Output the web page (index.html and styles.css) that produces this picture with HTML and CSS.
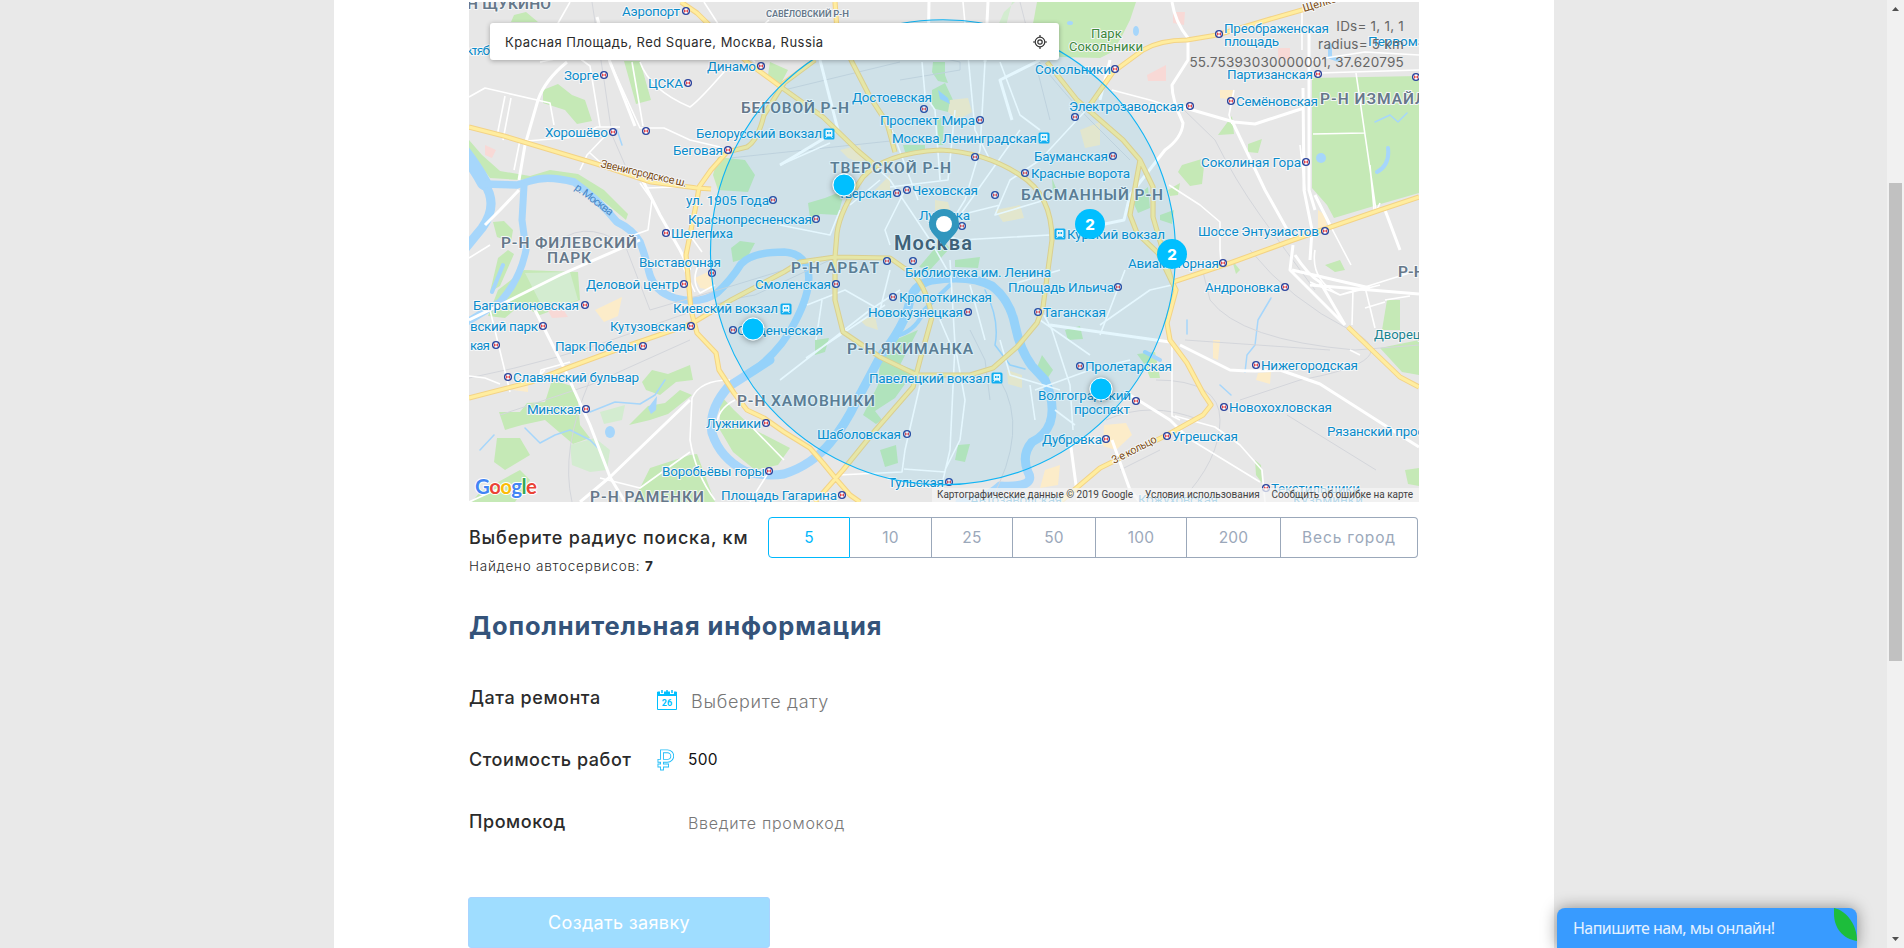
FILE: index.html
```html
<!DOCTYPE html>
<html lang="ru">
<head>
<meta charset="utf-8">
<title>Создать заявку</title>
<link rel="stylesheet" href="styles.css">
</head>
<body>
<div class="viewport">
<main class="sheet">
  <section class="map">
    <svg class="map-canvas" viewBox="469 2 950 500" width="950" height="500">
      <defs>
        <g id="m"><circle r="3.4" fill="#fff" stroke="#2a429b" stroke-width="1.3"/><path d="M-1.5 -1.6V1.6M1.5 -1.6V1.6M-1.5 0H1.5" stroke="#e0484e" stroke-width="1.1" fill="none"/></g>
        <g id="t"><rect x="-5.5" y="-5.5" width="11" height="11" rx="1.5" fill="#14aef0"/><path d="M-3 -3.5H3V2H-3ZM-2 2L-3.5 4M2 2L3.5 4" stroke="#fff" stroke-width="1" fill="#fff"/><path d="M-2 -2H-.5V0H-2ZM.5 -2H2V0H.5Z" fill="#14aef0"/></g>
        <filter id="ds" x="-50%" y="-50%" width="200%" height="200%"><feDropShadow dx="0" dy="1" stdDeviation="3" flood-opacity=".4"/></filter>
        <path id="hw" d="M469 127L504 136 527 143 597 164 651 182 697 188 711 189M681 2L697 13 747 62 781 87 823 117 857 150 877 167M815 60L784 83 764 115Q758 140 747 147L727 152 711 170 699 187 697 200 686 255 691 310 697 333 716 353 719 370 734 393 747 410 764 418 784 432 810 448 823 463 837 480 850 495 860 502M835 257L837 233Q840 210 863 177 Q885 153 940 150Q985 152 1020 175Q1052 195 1052 240L1043 307 1037 323 1017 347 993 368 970 375H917L880 357 843 332 835 300ZM835 2L837 30 852 62 870 97 887 123 895 152M1047 62L1077 100 1100 120 1123 140 1140 160 1153 187V217L1172 282 1176 290 1167 323 1170 340 1187 363 1203 393 1211 405 1203 415 1167 435 1100 468 1060 502M1140 160L1130 215 1137 233 1158 253 1172 282M1090 105L1113 72 1143 50Q1160 40 1187 40L1217 35 1267 20 1330 2M1173 282L1230 263 1293 240 1380 210 1419 197M1348 327L1400 377 1419 387M469 398L531 382 567 368 624 347 691 324 731 300 784 272 800 262 835 257 890 258 907 270Q925 280 932 317L920 360 913 387 873 433 843 470 815 502"/>
      </defs>
      <rect x="469" y="2" width="950" height="500" fill="#e7e7e7"/>
      <!-- parks -->
      <g fill="#c5e9b6">
        <path d="M1037 2H1136L1130 20 1121 38 1112 52 1100 58 1060 57 1030 40Z"/>
        <path d="M1312 78L1419 76V193L1384 203 1334 218 1327 205 1312 188Z"/>
        <path d="M543 90L558 84 572 95 585 100 592 121 577 124 565 110 543 103Z"/>
        <path d="M514 15L526 12 538 22H511ZM624 61H640L651 100 636 104Z"/>
        <path d="M718 157L745 160 755 175 748 192 718 190 713 175Z"/>
        <path d="M731 248L740 241 755 243 747 258 733 262ZM493 222L504 221 513 230 511 242 497 237Z"/>
        <path d="M524 270L578 272 580 300 540 315 520 305 505 318 488 316 498 290ZM498 258L508 250 514 254 500 286 490 292Z"/>
        <path d="M552 380L575 387 578 402 580 425 590 438 573 444 545 420 522 425 505 430 499 412 520 412 527 403 545 402ZM497 438L520 438 530 455 505 470 494 462Z"/>
        <path d="M642 382L652 370 668 374 690 365 693 380 676 382 660 395 646 390ZM629 425L648 406 665 403 680 390 692 395 668 414 650 420Z"/>
        <path d="M720 395L734 410 755 430 790 448 778 465 755 470 733 452 720 430ZM650 468L690 455 697 454 703 470 715 502H633Z"/>
        <path d="M480 492L520 470 530 480 515 502H472Z"/>
        <path d="M895 340L918 330 900 365 915 370 895 398 875 411 882 420 876 424 863 415 878 385 880 362Z"/>
        <path d="M933 62H945V75L948 83 938 81 932 72ZM932 90L945 83 953 100 948 112 932 108Z"/>
        <path d="M937 118L944 118 943 145 938 145ZM903 145L925 145 925 152 905 152ZM808 203L825 198 845 190 838 215 820 214 811 226Z"/>
        <path d="M815 340L829 338 825 352 815 355ZM880 450L896 445 898 463 885 467ZM958 445L970 444 965 462 955 460ZM1065 330L1080 326 1083 339 1068 340ZM1042 355L1053 370 1047 379 1036 370Z"/>
        <path d="M925 260L942 240 950 248 930 270 919 267ZM955 260L980 257 978 268 955 267ZM1132 200L1148 187 1150 208 1138 213ZM1160 215L1174 210 1172 224 1160 220Z"/>
        <path d="M1182 165L1205 158 1202 184 1190 186 1178 172ZM1168 190L1180 183 1178 195 1170 196ZM1248 144L1262 139 1258 153 1248 152ZM1232 116L1234 134 1218 135ZM1255 460L1261 465 1262 483 1256 475Z"/>
        <path d="M1387 300L1400 300 1400 330 1382 330ZM1380 348L1419 340V375L1402 372ZM1405 470L1419 468V486L1408 484ZM1325 265L1340 260 1345 270 1335 272ZM1232 260L1240 270 1236 274Z"/>
        <path d="M770 62L788 70 780 85 768 75ZM1137 354L1155 352 1160 378 1150 378 1145 365ZM1052 178L1058 193 1053 194Z"/>
        <path d="M469 140L482 155 500 171 530 176 550 170 578 174 604 190 628 214 626 220 602 200 576 181 548 175 520 180 490 178 469 150Z"/>
      </g>
      <g fill="#d3ecd0"><path d="M1004 12L1015 2H1012L1005 30H996ZM570 445L595 438 610 450 607 470 590 472 572 465ZM600 412L625 405 622 420 604 424ZM525 273L570 272 578 300 545 312Z"/></g>
      <g fill="#f8d9d6"><path d="M1173 12L1185 12 1184 25 1173 23ZM1147 75L1166 65V81L1148 81ZM1278 48H1290L1290 60 1278 58ZM485 145L496 150 492 158 485 155ZM546 307L560 304 568 317 552 318Z"/></g>
      <g fill="#fcecc9"><path d="M595 310L622 297 618 316 604 322ZM695 278L712 270 712 290 700 288ZM517 383L528 383 528 392 513 390ZM1220 90L1234 90 1234 100 1220 98ZM1104 425L1126 423 1132 435 1116 450 1103 446ZM1258 373L1271 372 1270 384 1256 380ZM1213 340L1220 340 1218 360 1213 358ZM1318 210L1325 215 1328 232 1318 230ZM950 100L968 98 972 112 958 120 948 112ZM935 200L948 202 950 210 935 210ZM875 190L890 175 890 190ZM1080 130L1100 122 1100 145 1085 148ZM995 210L1020 205 1024 218 1003 222ZM840 150L860 145 865 165 848 158ZM860 320L875 316 878 330 866 326ZM1007 370L1022 375 1022 388 1008 384ZM1045 470L1060 465 1058 485 1040 488Z"/></g>
      <!-- water -->
      <g fill="none" stroke="#a6d6fb" stroke-linecap="round" stroke-linejoin="round">
        <path stroke-width="14" d="M462 150Q476 168 484 183"/>
        <path stroke-width="9" d="M484 183Q499 205 482 228L464 250"/>
        <path stroke-width="7.500" d="M484 184L517 185 530 181Q547 175 574 182Q597 198 617 222Q632 229 640 242Q646 258 649 272Q654 292 675 298Q700 305 717 293Q731 280 741 264Q752 252 784 252Q803 253 808 270Q812 290 795 322Q784 345 762 364"/>
        <path stroke-width="7" d="M524 186L522 220 526 250Q520 280 500 302L464 324"/>
        <path stroke-width="9" d="M770 360Q750 373 728 387Q708 410 712 433Q720 458 745 471Q765 477 784 474Q812 465 830 443 Q845 425 856 402 L880 357Q905 325 909 304 Q912 285 932 280 Q970 274 992 286 Q1010 300 1015 325 Q1020 350 1032 366L1045 380Q1056 405 1050 423Q1045 436 1032 442Q1021 455 1028 472Q1037 488 1000 486Q985 500 960 502"/>
        <path stroke-width="4" d="M900 335Q918 328 924 310L950 285"/>
        <path stroke-width="1.5" d="M985 290Q1000 320 995 345L1010 365 1025 369M1271 298L1258 320 1255 345 1247 355 1245 372M590 412L615 402 640 404 655 395 665 380M525 428L540 443 555 435 570 430 590 440 600 450M617 130L622 145M480 450L494 435M1187 320V334M1220 385L1231 395M1375 122L1390 115 1398 122 1407 113"/>
        <path stroke-width="4" d="M1330 45V57L1338 60M1388 148Q1390 165 1377 172M1145 352L1160 360M503 265L492 292"/>
      </g>
      <g fill="#a6d6fb"><ellipse cx="610" cy="432" rx="5" ry="6"/><circle cx="1321" cy="158" r="5"/><ellipse cx="1070" cy="23" rx="3" ry="2"/><ellipse cx="1136" cy="31" rx="3" ry="5"/><path d="M648 408L657 396 656 410 651 414ZM938 90L948 98 950 104 940 99Z"/></g>
      <!-- railways -->
      <g fill="none" stroke="#d4d6db" stroke-width="1">
        <path d="M592 2L604 80 612 135 625 165M469 378Q560 360 640 330T755 295L830 260M784 270L735 285 650 310M500 415L590 385 690 340M550 250Q580 215 625 245L650 310M572 502Q560 450 590 380"/>
        <path d="M880 45L960 62 960 70 900 80M1010 25Q1060 90 1090 120L1130 160M1020 2L1050 120M1181 107L1215 140Q1235 180 1260 215T1315 290M1200 260L1210 300Q1240 340 1355 350L1419 345M1185 340L1330 350M1156 380Q1220 380 1220 420T1180 502M1250 250Q1290 300 1350 330T1300 380L1240 400M1287 415L1376 470M1000 380Q1030 430 990 502M970 330L985 360 990 400M784 90L900 62M730 158L900 140M1120 470L1160 450M1106 420Q1150 400 1200 420"/>
      </g>
      <!-- minor roads -->
      <g fill="none" stroke="#fff" stroke-width="1.6" stroke-linejoin="round">
        <path d="M469 97L485 88 550 103 554 125M505 96L497 136M511 98L503 140M540 62L575 55 590 66 600 127M527 141L575 137 597 127H620M610 62L640 128 664 128 690 140 720 147M632 62L643 126M606 135L587 155 580 170M640 62Q650 90 690 107Q700 100 730 65M540 55L570 2M769 20L735 50 704 2M720 30L755 62M640 183L652 200 648 230 634 235M590 153L600 162M647 188L697 186M469 258L490 245M514 170L520 140"/>
        <path d="M664 233L692 238 702 252M683 267L695 292M700 262Q690 280 700 293L715 285M545 370L540 375 541 370 570 362M469 376L485 378 500 384M692 398Q700 380 730 380M692 398L690 440Q696 475 715 500M690 452L640 488 600 478M735 400Q715 410 717 430M745 420L784 460M770 470L750 502M469 502L500 488M510 392L490 310"/>
        <path d="M780 165L830 143M892 130L918 200M840 210L830 235 780 225M857 150L890 180 910 210 930 240 950 275M1020 130L960 215 1000 205M955 110L948 180 890 187M985 62L980 150 965 200 940 240M905 190L885 230 890 245M1000 62L1020 115 1040 130M922 62L925 95 935 110 940 180M990 160L975 130 963 2M1100 95L1040 160 1010 180 995 215 1045 200M880 180L850 205M1050 235L960 240 930 230"/>
        <path d="M807 305L845 290 880 310 890 270M816 340L822 300M806 358L885 305M780 380L870 310 900 290M920 385L905 450 902 472 838 475M955 345L965 400 960 440 945 470M904 469L945 472M950 260L955 345 950 450 943 480M1000 340L1010 375 1060 390M1040 320L1090 355M1044 315L1052 330 1070 385 1073 430M1030 385L1035 420M1100 325L1150 290 1172 285M1010 285L1060 270M1035 390L1090 370 1130 360M1055 410L1075 425M970 285L985 340M940 320L955 355"/>
        <path d="M1112 90L1150 100 1182 110M1232 124L1229 115 1234 90M1169 185L1200 205 1220 222V250L1221 262M1300 145L1305 190M1313 134L1364 133M1356 73L1376 210M1300 75L1318 73 1419 70M1312 60L1365 52 1419 55M1302 50V10M1370 165L1374 210M1330 225L1351 265M1376 212L1380 203M1365 308L1385 302M1353 290L1352 325M1310 282L1340 295 1380 285M1365 287L1419 270M1315 250Q1310 280 1340 295L1365 287 1375 328M1172 340L1172 416 1180 420M1175 416L1215 427 1240 445 1262 470 1265 502M1188 438L1260 482M1350 350L1360 355M1385 300L1410 296M1100 335L1125 270"/>
      </g>
      <g fill="none" stroke="#fff" stroke-width="3" stroke-linejoin="round">
        <path d="M567 62Q545 80 538 100L525 145 519 180M519 190L500 210 485 225M640 175L660 215 680 250 690 270M469 320L510 300 560 275 640 240M535 310L565 370 590 425 610 477 625 502M610 477L690 400M610 477L580 502M597 17L610 62 635 126"/>
        <path d="M1172 2Q1175 22 1188 38V60L1172 85Q1172 100 1183 123Q1182 138 1165 150L1130 195 1124 220 1100 225M1309 30V190L1315 210M1182 107L1234 122 1255 124 1304 108M1233 123L1265 190 1293 240M1303 88L1304 190L1312 230 1310 260M1315 195L1330 225M1293 245L1290 270 1345 325M1180 345L1230 370Q1255 372 1280 370L1320 384 1400 435 1419 447M1050 325L1170 342M1310 285L1419 294M1385 210L1400 250M1295 255Q1308 275 1320 282L1345 325M1292 270L1370 288M988 2L985 62M929 2L928 60"/>
        <path d="M1110 60L1100 100M1070 440L1078 500M1112 440L1130 490 1140 502M1130 395L1170 420 1190 440M820 60L838 130 780 165M1040 60L1000 80 1012 120"/>
      </g>
      <!-- highways -->
      <g fill="none" stroke-linejoin="round">
        <use href="#hw" stroke="#f3d386" stroke-width="5.200"/>
        <use href="#hw" stroke="#ffed9f" stroke-width="3.200"/>
      </g>
      <!-- station labels -->
      <g class="st">
        <text x="622" y="16" textLength="58">Аэропорт</text><text x="466" y="55" textLength="24">ктяб</text>
        <text x="564" y="80" textLength="35">Зорге</text><text x="648" y="88" textLength="35">ЦСКА</text><text x="707" y="71" textLength="49">Динамо</text>
        <text x="545" y="137" textLength="63">Хорошёво</text><text x="696" y="138" textLength="126">Белорусский вокзал</text><text x="673" y="155" textLength="50">Беговая</text>
        <text x="686" y="205" textLength="83">ул. 1905 Года</text><text x="688" y="224" textLength="124">Краснопресненская</text><text x="671" y="238" textLength="62">Шелепиха</text>
        <text x="852" y="102" textLength="80">Достоевская</text><text x="880" y="125" textLength="95">Проспект Мира</text><text x="892" y="143" textLength="145">Москва Ленинградская</text>
        <text x="1035" y="74" textLength="76">Сокольники</text><text x="1069" y="111" textLength="115">Электрозаводская</text><text x="1034" y="161" textLength="74">Бауманская</text><text x="1031" y="178" textLength="99">Красные ворота</text>
        <text x="838" y="198" textLength="54">Тверская</text><text x="912" y="195" textLength="66">Чеховская</text><text x="919" y="220" textLength="51">Лубянка</text><text x="1067" y="239" textLength="98">Курский вокзал</text>
        <text x="1224" y="33" textLength="105">Преображенская</text><text x="1224" y="46" textLength="55">площадь</text><text x="1368" y="46">Первомайская</text><text x="1227" y="79" textLength="86">Партизанская</text><text x="1236" y="106" textLength="82">Семёновская</text>
        <text x="1201" y="167" textLength="100">Соколиная Гора</text><text x="1198" y="236" textLength="121">Шоссе Энтузиастов</text><text x="1128" y="268" textLength="91">Авиамоторная</text><text x="1205" y="292" textLength="75">Андроновка</text>
        <text x="639" y="267" textLength="82">Выставочная</text><text x="586" y="289" textLength="93">Деловой центр</text><text x="473" y="310" textLength="106">Багратионовская</text><text x="470" y="331" textLength="68">вский парк</text><text x="470" y="350" textLength="20">кая</text>
        <text x="610" y="331" textLength="76">Кутузовская</text><text x="555" y="351" textLength="82">Парк Победы</text><text x="513" y="382" textLength="126">Славянский бульвар</text><text x="527" y="414" textLength="54">Минская</text><text x="706" y="428" textLength="55">Лужники</text><text x="662" y="476" textLength="103">Воробьёвы горы</text><text x="721" y="500" textLength="116">Площадь Гагарина</text>
        <text x="755" y="289" textLength="76">Смоленская</text><text x="673" y="313" textLength="105">Киевский вокзал</text><text x="737" y="335" textLength="86">Студенческая</text><text x="905" y="277" textLength="146">Библиотека им. Ленина</text><text x="1008" y="292" textLength="106">Площадь Ильича</text><text x="899" y="302" textLength="93">Кропоткинская</text><text x="868" y="317" textLength="95">Новокузнецкая</text><text x="1043" y="317" textLength="63">Таганская</text>
        <text x="869" y="383" textLength="121">Павелецкий вокзал</text><text x="817" y="439" textLength="84">Шаболовская</text><text x="888" y="487" textLength="56">Тульская</text><text x="1085" y="371" textLength="87">Пролетарская</text><text x="1038" y="400" textLength="93">Волгоградский</text><text x="1074" y="414" textLength="56">проспект</text><text x="1042" y="444" textLength="60">Дубровка</text>
        <text x="1261" y="370" textLength="97">Нижегородская</text><text x="1229" y="412" textLength="103">Новохохловская</text><text x="1172" y="441" textLength="66">Угрешская</text><text x="1327" y="436" textLength="105">Рязанский просп</text><text x="1271" y="493" textLength="89">Текстильщики</text><text x="970" y="504" textLength="92">Автозаводская</text><text x="1138" y="504" textLength="80">Кожуховская</text><text x="1293" y="504" textLength="70">Кузьминки</text>
      </g>
      <g class="park"><text x="1091" y="38">Парк</text><text x="1069" y="51" textLength="74">Сокольники</text><text class="teal" x="1374" y="339">Дворец</text></g>
      <g class="dist">
        <text x="467" y="9" textLength="84">Н ЩУКИНО</text><text x="741" y="113" textLength="108">БЕГОВОЙ Р-Н</text><text x="830" y="173" textLength="121">ТВЕРСКОЙ Р-Н</text><text x="1021" y="200" textLength="142">БАСМАННЫЙ Р-Н</text><text x="1320" y="104" textLength="106">Р-Н ИЗМАЙЛ</text>
        <text x="501" y="248" textLength="136">Р-Н ФИЛЕВСКИЙ</text><text x="547" y="263" textLength="44">ПАРК</text><text x="791" y="273" textLength="88">Р-Н АРБАТ</text><text x="847" y="354" textLength="126">Р-Н ЯКИМАНКА</text><text x="737" y="406" textLength="138">Р-Н ХАМОВНИКИ</text><text x="590" y="502" textLength="114">Р-Н РАМЕНКИ</text><text x="1398" y="277">Р-Н</text>
        <text class="small" x="766" y="17" textLength="83">САВЁЛОВСКИЙ Р-Н</text><text class="city" x="894" y="250" textLength="78">Москва</text>
      </g>
      <g class="road"><text transform="translate(600 167) rotate(13)" textLength="88">Звенигородское ш.</text><text transform="translate(1114 464) rotate(-27)" textLength="49">3-е кольцо</text><text transform="translate(1304 12) rotate(-17)">Щёлковское</text><text class="river" transform="translate(574 189) rotate(37)" textLength="45">р. Москва</text></g>
      <use href="#m" x="686" y="11"/><use href="#m" x="604" y="75"/><use href="#m" x="688" y="83"/><use href="#m" x="761" y="66"/><use href="#m" x="613" y="132"/><use href="#m" x="646" y="131"/><use href="#m" x="728" y="150"/><use href="#m" x="773" y="200"/><use href="#m" x="816" y="219"/><use href="#m" x="666" y="233"/>
      <use href="#m" x="924" y="109"/><use href="#m" x="980" y="120"/><use href="#m" x="975" y="157"/><use href="#m" x="1075" y="117"/><use href="#m" x="1115" y="69"/><use href="#m" x="1190" y="106"/><use href="#m" x="1113" y="156"/><use href="#m" x="1025" y="173"/><use href="#m" x="897" y="193"/><use href="#m" x="907" y="190"/><use href="#m" x="995" y="195"/><use href="#m" x="962" y="226"/>
      <use href="#m" x="1219" y="34"/><use href="#m" x="1318" y="74"/><use href="#m" x="1416" y="77"/><use href="#m" x="1231" y="101"/><use href="#m" x="1306" y="162"/><use href="#m" x="1325" y="231"/><use href="#m" x="1223" y="263"/><use href="#m" x="1285" y="287"/><use href="#m" x="1118" y="287"/>
      <use href="#m" x="712" y="273"/><use href="#m" x="684" y="284"/><use href="#m" x="585" y="305"/><use href="#m" x="543" y="326"/><use href="#m" x="496" y="345"/><use href="#m" x="691" y="326"/><use href="#m" x="643" y="346"/><use href="#m" x="508" y="377"/><use href="#m" x="586" y="409"/><use href="#m" x="766" y="423"/><use href="#m" x="769" y="471"/><use href="#m" x="842" y="495"/><use href="#m" x="733" y="330"/>
      <use href="#m" x="887" y="261"/><use href="#m" x="913" y="261"/><use href="#m" x="836" y="284"/><use href="#m" x="893" y="297"/><use href="#m" x="968" y="312"/><use href="#m" x="1038" y="312"/><use href="#m" x="907" y="434"/><use href="#m" x="949" y="482"/><use href="#m" x="1080" y="366"/><use href="#m" x="1136" y="401"/><use href="#m" x="1106" y="439"/><use href="#m" x="1167" y="436"/><use href="#m" x="1224" y="407"/><use href="#m" x="1256" y="365"/><use href="#m" x="1266" y="488"/>
      <use href="#t" x="829" y="134"/><use href="#t" x="1044" y="138"/><use href="#t" x="1060" y="234"/><use href="#t" x="786" y="309"/><use href="#t" x="997" y="378"/>
      <circle cx="943" cy="252.300" r="232.500" fill="#00b4f5" fill-opacity=".1" stroke="#0fb4f5" stroke-width="1.100"/>
      <g fill="#00bfff" stroke="#fff" stroke-width="1" filter="url(#ds)"><circle cx="844" cy="185" r="11"/><circle cx="753" cy="329" r="11"/><circle cx="1101" cy="389" r="11"/></g>
      <g class="cluster"><circle cx="1090" cy="224" r="15"/><text x="1090" y="229.500">2</text><circle cx="1172" cy="254" r="15"/><text x="1172" y="259.500">2</text></g>
      <path d="M944 247C937 236 929 233 929 224A15 15 0 0 1 959 224C959 233 951 236 944 247Z" fill="#3096be"/><circle cx="944" cy="224" r="8" fill="#fff"/>
      <text class="logo" x="475" y="494" textLength="62"><tspan fill="#4285f4">G</tspan><tspan fill="#ea4335">o</tspan><tspan fill="#fbbc05">o</tspan><tspan fill="#4285f4">g</tspan><tspan fill="#34a853">l</tspan><tspan fill="#ea4335">e</tspan></text>
    </svg>
    <div class="search"><span class="search-text">Красная Площадь, Red Square, Москва, Russia</span>
      <svg width="14" height="14" viewBox="0 0 14 14" fill="none" stroke="#333" stroke-width="1.200"><circle cx="7" cy="7" r="4.800"/><circle cx="7" cy="7" r="2.200"/><path d="M7 0V2.200M7 11.800V14M0 7H2.200M11.800 7H14"/></svg>
    </div>
    <div class="debug"><div class="ids">IDs= 1, 1, 1</div><div class="rad">radius= 5 km</div><div>55.75393030000001, 37.620795</div></div>
    <div class="credits"><span class="c1">Картографические данные © 2019 Google</span><span class="c2">Условия использования</span><span class="c3">Сообщить об ошибке на карте</span></div>
  </section>
  <section class="radius">
    <div class="radius-info"><div class="radius-label">Выберите радиус поиска, км</div><div class="found">Найдено автосервисов: <b>7</b></div></div>
    <div class="choices"><span class="choice on">5</span><span class="choice">10</span><span class="choice w25">25</span><span class="choice w50">50</span><span class="choice w100">100</span><span class="choice w200">200</span><span class="choice all">Весь город</span></div>
  </section>
  <h2 class="heading">Дополнительная информация</h2>
  <div class="row"><span class="label l-date">Дата ремонта</span>
    <svg class="icon" width="20" height="20" viewBox="0 0 20 20"><path d="M.5 2H19.500V19.500H.5Z" fill="#fff" stroke="#00bfff"/><path d="M0 2H20V6H0Z" fill="#00bfff"/><path d="M3 0H7V4H3ZM13 0H17V4H13Z" fill="#fff"/><path d="M5 0V3M15 0V3M10 0V2.500" stroke="#00bfff" stroke-width="1.500"/><text class="cal" x="10" y="15.500">26</text></svg>
    <span class="ph date">Выберите дату</span></div>
  <div class="row"><span class="label l-cost">Стоимость работ</span>
    <svg class="icon rub" width="17" height="22" viewBox="0 0 17 22" fill="none"><path d="M5 21.500V2.300H10.500A4.600 4.600 0 0 1 10.500 11.800H.5M.5 16.500H12" stroke="#22bdf8" stroke-width="3.800"/><path d="M5 20.600V2.300H10.500A4.600 4.600 0 0 1 10.500 11.800H1.400M1.400 16.500H11.100" stroke="#fff" stroke-width="2"/></svg>
    <span class="value">500</span></div>
  <div class="row"><span class="label l-promo">Промокод</span><span class="icon gap"></span><span class="ph promo">Введите промокод</span></div>
  <div class="submit">Создать заявку</div>
</main>
<aside class="scroll"><svg width="7" height="4" viewBox="0 0 7 4"><path d="M3.500 0L7 4H0Z" fill="#505050"/></svg><div class="thumb"></div><svg width="7" height="4" viewBox="0 0 7 4"><path d="M0 0H7L3.500 4Z" fill="#505050"/></svg></aside>
</div>
<div class="chat"><span>Напишите нам, мы онлайн!</span><svg class="leaf" width="23" height="33" viewBox="0 0 23 33"><path d="M0 0C13 3 23 17 23 33C9 31 0 20 0 6Z" fill="#1dbd3b"/></svg></div>
</body>
</html>
```
FILE: styles.css
```css
* { box-sizing: border-box; }
body { margin: 0; background: #e9e9e9; font-family: Inter, "Noto Sans", sans-serif; color: #2b2b2b; overflow: hidden; }
.viewport { display: flex; height: 948px; justify-content: space-between; padding-left: 334px; overflow: hidden; }
.sheet { width: 1220px; background: #fff; padding: 2px 135px 0; }

.map { position: relative; width: 950px; height: 500px; overflow: hidden; }
.map-canvas { display: block; }
.map-canvas text { font-family: Roboto, sans-serif; font-size: 13.500px; paint-order: stroke; stroke: #f5f7f8; stroke-width: 2px; stroke-linejoin: round; }
.st text { fill: #0b8bca; }
.map-canvas .park text { fill: #3c873c; font-size: 13px; }
.map-canvas .park .teal { fill: #1a8390; }
.map-canvas .dist text { fill: #66788a; font-size: 15.500px; font-weight: 600; }
.map-canvas .dist .small { font-size: 9.500px; }
.map-canvas .dist .city { font-size: 20px; fill: #47596a; }
.map-canvas .road text { fill: #7a4a10; font-size: 11px; }
.map-canvas .road .river { fill: #4a86c5; stroke: none; }
.cluster { fill: #00bfff; }
.map-canvas .cluster text { fill: #fff; stroke: none; font: 800 15px Inter, sans-serif; text-anchor: middle; }
.map-canvas .logo { font-family: Lato, sans-serif; font-size: 20.500px; font-weight: 700; stroke: #fff; }

.search { position: absolute; left: 21px; top: 21px; width: 569px; height: 37px; padding: 0 12px 0 15px; display: flex; align-items: center; justify-content: space-between; background: #fff; border-radius: 3px; box-shadow: 0 1px 5px rgba(0,0,0,.3); font-size: 13px; letter-spacing: .48px; }
.debug { position: absolute; right: 15px; top: 15px; text-align: right; font-size: 13.500px; line-height: 18px; letter-spacing: .22px; color: #666; }
.credits { position: absolute; right: 0; bottom: 0; width: 487px; height: 14px; padding: 0 6px 0 5px; display: flex; justify-content: space-between; background: rgba(245,245,245,.72); font: 10px/14px Roboto, sans-serif; color: #444; white-space: nowrap; }

.radius { display: flex; justify-content: space-between; padding-top: 15px; height: 90px; }
.radius-label { font-size: 18px; font-weight: 500; letter-spacing: .8px; line-height: 22px; padding-top: 10px; white-space: nowrap; }
.found { font-size: 13.500px; line-height: 18px; margin-top: 8px; font-weight: 300; letter-spacing: .75px; }
.found b { font-weight: 700; }
.choices { display: flex; width: 651px; height: 41px; }
.choice { flex: none; width: 82px; border: 1px solid #9ba8ba; border-left-width: 0; display: flex; align-items: center; justify-content: center; font-size: 15.500px; letter-spacing: .2px; color: #9ba8ba; }
.choice.on { border: 1px solid #00b8fc; border-radius: 4px 0 0 4px; color: #00b8fc; }
.choice.w25 { width: 81px; }
.choice.w50 { width: 83px; }
.choice.w100 { width: 91px; }
.choice.w200 { width: 94px; }
.choice.all { width: 137px; border-radius: 0 4px 4px 0; letter-spacing: .85px; }

.heading { margin: 0; padding-top: 17px; height: 74px; font-size: 25.500px; letter-spacing: .85px; line-height: 34px; color: #34537a; font-weight: 700; white-space: nowrap; }
.row { display: flex; height: 62px; padding-top: 20px; align-items: flex-start; }
.label { width: 188px; font-size: 18px; letter-spacing: .55px; line-height: 24px; font-weight: 500; white-space: nowrap; }
.icon { flex: none; width: 20px; margin-top: 4px; }
.icon.rub { width: 17px; margin-right: 3px; margin-top: 1px; }
.map-canvas .cal, .cal { font: 700 9px Roboto, sans-serif; fill: #00bfff; text-anchor: middle; }
.ph { color: #777; font-weight: 300; font-size: 18px; letter-spacing: .7px; line-height: 24px; margin: 4px 0 0 14px; white-space: nowrap; }
.promo { font-size: 16px; margin: 1px 0 0 11px; }
.value { font-size: 15.500px; letter-spacing: .3px; line-height: 24px; margin-left: 11px; color: #111; }
.submit { width: 302px; height: 51px; margin: 45px 0 0 -1px; background: #9fddff; border: 1px solid #a9d4ff; border-radius: 3px; display: flex; align-items: center; justify-content: center; color: #fff; font-size: 18px; letter-spacing: .35px; }

.scroll { width: 17px; height: 948px; background: #f1f1f1; display: flex; flex-direction: column; align-items: center; padding: 7px 0 7px; justify-content: space-between; }
.thumb { width: 13px; height: 478px; background: #c1c1c1; margin-bottom: 104px; }

.chat { position: absolute; left: 1557px; top: 908px; width: 300px; height: 40px; padding: 7px 16px; background: #389bff; border-radius: 8px 8px 0 0; box-shadow: 0 0 16px rgba(0,0,0,.4); color: #e6f2ff; font: 16px/26px "Noto Sans", sans-serif; letter-spacing: -.55px; white-space: nowrap; }
.leaf { position: absolute; right: 0; top: 0; }
```
